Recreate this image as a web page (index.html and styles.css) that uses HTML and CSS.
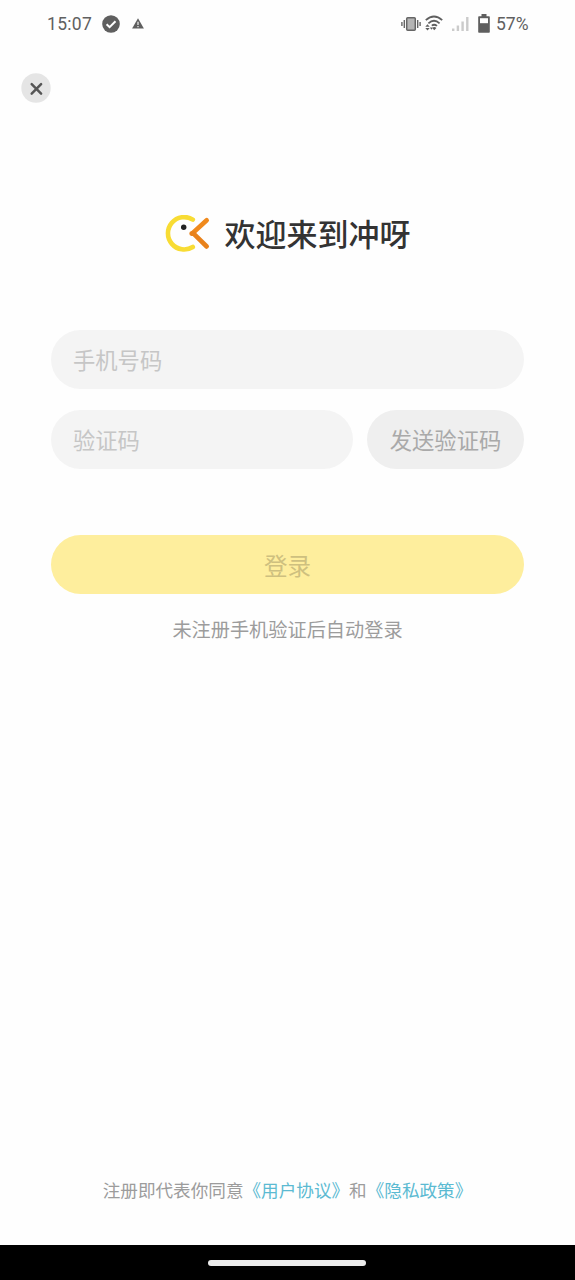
FILE: index.html
```html
<!DOCTYPE html>
<html lang="zh-CN">
<head>
<meta charset="utf-8">
<title>登录</title>
<link rel="stylesheet" href="styles.css">
</head>
<body>
<div class="screen">
  <header class="status">
    <span class="clock">15:07</span>
    <svg class="ic-check" width="18" height="18" viewBox="0 0 18 18"><circle cx="9" cy="9" r="8.8" fill="#5f5f5f"/><path d="M4.600 9.200l3 3 5.900-6" fill="none" stroke="#fff" stroke-width="2"/></svg>
    <svg class="ic-warn" width="12" height="11" viewBox="0 0 12 11"><path d="M6 .3L11.900 10.500H.1z" fill="#5f5f5f"/><path d="M6 3.800v3.200M6 8v1.300" stroke="#fff" stroke-width="1.100"/></svg>
    <span class="spacer"></span>
    <svg class="ic-vibrate" width="20" height="16" viewBox="0 0 20 16"><rect x="5.700" y="1.700" width="8.600" height="12.600" rx="1" fill="#b5b5b5" stroke="#666" stroke-width="1.500"/><path d="M3.300 4v8M16.700 4v8M.9 6v4M19.100 6v4" stroke="#666" stroke-width="1.400"/></svg>
    <svg class="ic-wifi" width="18" height="17" viewBox="0 0 18 17"><g fill="none" stroke="#5f5f5f" stroke-width="1.800"><path d="M.8 5.200Q9-2.200 17.200 5.200M3.400 8.300Q9 3.300 14.600 8.300M6.800 10.600Q9.200 8.700 12 10.900"/></g><path d="M9.300 15.200L7.200 12.900Q9.300 11.300 11.400 12.900z" fill="#5f5f5f"/><path d="M.3 11.700L2.500 9.200 4.700 11.700zM.3 12.900L2.500 15.400 4.700 12.900zM4.900 12.600h3l-1.500 2.200z" fill="#5f5f5f"/></svg>
    <svg class="ic-signal" width="17" height="16" viewBox="0 0 17 16"><path d="M0 12.500h2.400V15H0zM4.700 9.500h2.400V15H4.700zM9.400 5.500h2.400V15H9.400zM14.100 1h2.400v14h-2.400z" fill="#cbcbcb"/></svg>
    <svg class="ic-battery" width="12" height="19" viewBox="0 0 12 19"><path d="M3.500 0h5v2.200H11q.8 0 .8.800v15q0 .8-.8.800H1q-.8 0-.8-.8V3q0-.8.800-.8h2.500z" fill="#5f5f5f"/><path d="M2 4.200h8v5H2z" fill="#fff"/></svg>
    <span class="percent">57%</span>
  </header>

  <button class="close" aria-label="关闭">
    <svg width="30" height="30" viewBox="0 0 30 30"><circle cx="15" cy="15" r="14.700" fill="#e5e5e5"/><path d="M10.700 11.200l9.400 9.400M20.100 11.200l-9.400 9.400" stroke="#555" stroke-width="2.500" stroke-linecap="round"/></svg>
  </button>

  <h1 class="brand">
    <svg width="46" height="38" viewBox="0 0 46 38" fill="none" stroke-linecap="round"><path d="M27.800 4.600A16.200 16.200 0 1 0 27.800 32" stroke="#f8dc34" stroke-width="4.600"/><circle cx="18.700" cy="12.300" r="2.700" fill="#222"/><path d="M41.700 5.200L27.500 18.300" stroke="#f08a1d" stroke-width="4.600"/><path d="M26.600 18.600H28.600L41.700 31.500" stroke="#e8821c" stroke-width="4.600" stroke-linejoin="round"/></svg>
    <span class="brand-name">欢迎来到冲呀</span>
  </h1>

  <main class="form">
    <div class="field">手机号码</div>
    <div class="row">
      <div class="field code">验证码</div>
      <button class="send">发送验证码</button>
    </div>
    <button class="login">登录</button>
    <p class="hint">未注册手机验证后自动登录</p>
  </main>

  <footer class="terms">注册即代表你同意<a>《用户协议》</a>和<a>《隐私政策》</a></footer>
  <div class="nav"><span class="pill"></span></div>
</div>
</body>
</html>
```
FILE: styles.css
```css
* { box-sizing: border-box; }
body {
  margin: 0;
  background: #fefefe;
  font-family: "Noto Sans CJK SC", sans-serif;
}
.screen {
  width: 575px;
  height: 1280px;
  display: flex;
  flex-direction: column;
}
button {
  border: 0;
  padding: 0;
  margin: 0;
  font-family: inherit;
}
svg { display: block; flex: none; }
.status {
  height: 47px;
  padding: 0 47px;
  display: flex;
  align-items: center;
  font-family: Roboto, sans-serif;
  font-size: 17.5px;
  color: #606060;
}
.clock { width: 55px; padding-top: 1px; letter-spacing: .3px; }
.ic-check { margin-right: 12px; }
.spacer { flex: 1; }
.ic-vibrate { margin-right: 4px; }
.ic-wifi { margin-right: 9px; }
.ic-signal { margin-right: 9px; }
.ic-battery { margin-right: 6px; }
.percent { width: 32px; padding-top: 1px; white-space: nowrap; }
.close {
  width: 30px;
  height: 30px;
  margin: 26px 0 0 21px;
  background: none;
}
.brand {
  height: 46px;
  margin: 108px 0 0 165px;
  display: flex;
  align-items: center;
  gap: 13.5px;
  font-size: 31px;
  font-weight: 500;
  color: #333;
}
.brand-name {
  height: 46px;
  line-height: 43px;
}
.form {
  padding: 73px 51px 0;
  display: flex;
  flex-direction: column;
}
.field {
  height: 59px;
  padding-left: 22px;
  border-radius: 30px;
  background: #f4f4f4;
  color: #c6c6c6;
  font-size: 22.3px;
  font-weight: 400;
  line-height: 58px;
}
.row {
  display: flex;
  gap: 14px;
  margin-top: 21px;
}
.code { width: 302px; }
.send {
  width: 157px;
  height: 59px;
  padding-bottom: 1px;
  border-radius: 30px;
  background: #efefef;
  color: #a9a9a9;
  font-size: 22.3px;
  font-weight: 400;
}
.login {
  height: 59px;
  margin-top: 66px;
  border-radius: 30px;
  background: #feee9d;
  color: #cec07f;
  font-size: 23.5px;
  font-weight: 400;
}
.hint {
  margin: 20px 0 0;
  text-align: center;
  font-size: 19.2px;
  font-weight: 400;
  line-height: 30px;
  color: #9c9c9c;
}
.terms {
  margin-top: auto;
  padding-bottom: 41px;
  text-align: center;
  font-size: 17.6px;
  font-weight: 400;
  line-height: 28px;
  color: #9c9c9c;
  white-space: nowrap;
}
.terms a { color: #5bbad2; }
.nav {
  height: 35px;
  padding-right: 1px;
  background: #000;
  display: flex;
  justify-content: center;
  align-items: center;
}
.pill {
  width: 158px;
  height: 6px;
  border-radius: 3px;
  background: #ececec;
}
```
